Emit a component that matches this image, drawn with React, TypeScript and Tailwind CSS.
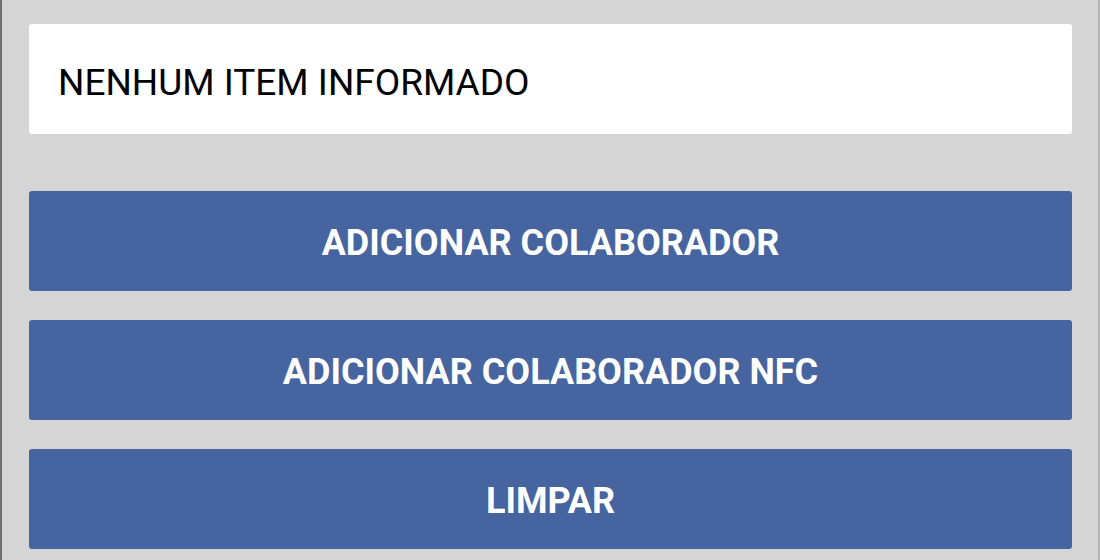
export default function App() {
  const buttons = ["ADICIONAR COLABORADOR", "ADICIONAR COLABORADOR NFC", "LIMPAR"];

  return (
    <div
      className="h-[560px] w-[1100px] overflow-hidden bg-[#d5d5d5] border-l-2 border-l-[#707070] border-r-2 border-r-[#b4b4b4] pl-[27px] pr-[26px] pt-[24px]"
      style={{ fontFamily: 'Roboto, "Open Sans", sans-serif' }}
    >
      <div className="flex h-[110px] items-center rounded-[3px] bg-white px-[29px] pt-[6px]">
        <span className="text-[37px] font-normal leading-none text-black">NENHUM ITEM INFORMADO</span>
      </div>

      <div className="mt-[57px] flex flex-col gap-[29px]">
        {buttons.map((label) => (
          <button
            key={label}
            className="flex h-[100px] w-full items-center justify-center rounded-[3px] bg-[#4564a0] pt-[4px] text-[36px] font-bold leading-none text-white"
          >
            {label}
          </button>
        ))}
      </div>
    </div>
  );
}
